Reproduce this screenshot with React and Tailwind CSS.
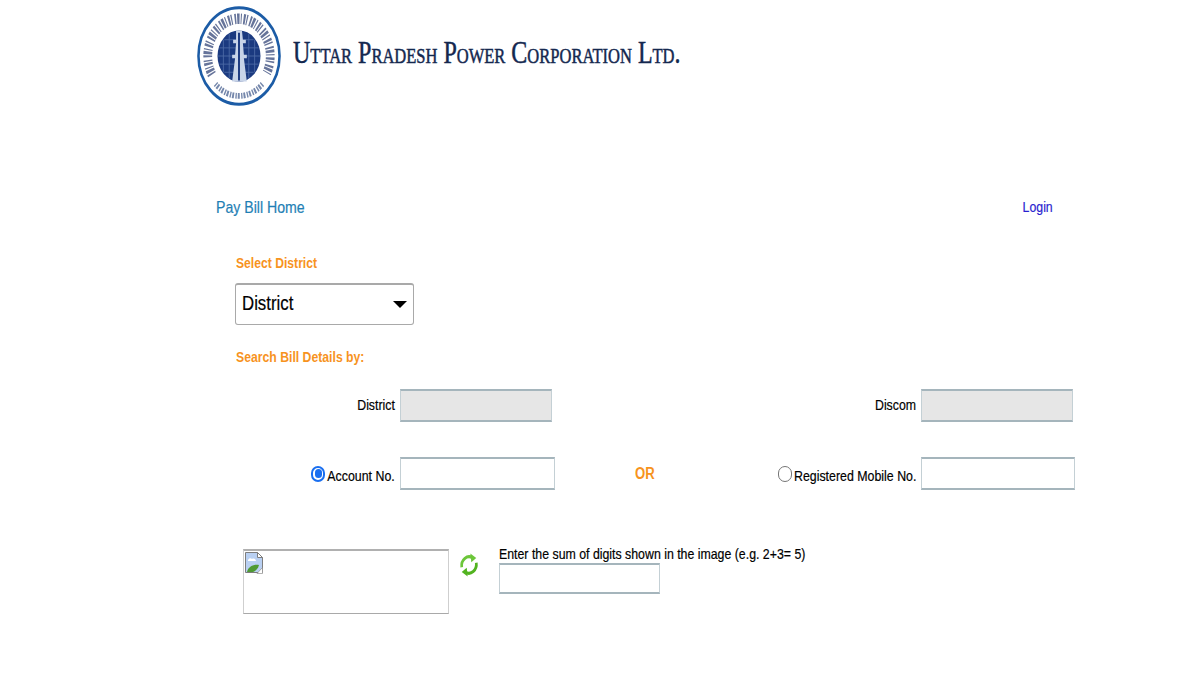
const labelFont = { fontFamily: '"Liberation Sans", Arial, sans-serif' };

function Logo() {
  return (
    <svg width="84" height="100" viewBox="0 0 86 86" preserveAspectRatio="none" className="shrink-0">
      <circle cx="43" cy="43" r="41.5" fill="#fff" stroke="#1c5ca6" strokeWidth="2.6" />
      <path d="M15.3 59A32 32 0 1 1 70.7 59" fill="none" stroke="#2b3f73" strokeWidth="9" strokeDasharray="1.6 1 2.4 1.2 1 1.8 2 1 1.2 2.4" opacity="0.72" />
      <path d="M19 67A33 33 0 0 0 67 67" fill="none" stroke="#3a5488" strokeWidth="5" strokeDasharray="1.4 1 2 1.4" opacity="0.7" />
      <circle cx="43" cy="43" r="22" fill="#1b3a80" />
      <g stroke="#6f8cc0" strokeWidth="0.8" opacity="0.6" fill="none">
        <path d="M23 36h40M21.500 43h43M23 50h40M28 29h30M28 57h30" />
        <path d="M33 24v38M53 24v38M27 29v28M59 29v28" />
      </g>
      <path d="M40 21h6l1 8h3v3h-3l1 10h3v3h-3l3 20H36l3-20h-3v-3h3l1-10h-3v-3h3z" fill="#c8d4e8" />
      <path d="M42 23h2v41h-2z" fill="#1b3a80" />
    </svg>
  );
}

function BrokenImage() {
  return (
    <svg width="18" height="22" viewBox="0 0 18 22" className="shrink-0">
      <path d="M.5.5h12l5 5v15H.5z" fill="#b9d0f2" stroke="#7d7d7d" />
      <path d="M12.500.5v5h5z" fill="#fff" stroke="#7d7d7d" />
      <path d="M3 8c1-2 3-2 4-1 2-1 4 0 4 2H3z" fill="#fff" />
      <path d="M2 20c1-5 6-8 12-7-1 4-4 7-7 7z" fill="#4f9a33" />
      <path d="M12 21.500l5.500-6v6z" fill="#fff" stroke="#7d7d7d" strokeWidth="0.6" />
    </svg>
  );
}

function RefreshIcon() {
  return (
    <svg width="20" height="24" viewBox="0 0 22 22" preserveAspectRatio="none" className="shrink-0">
      <path d="M3 13A8.200 8.200 0 0 1 15 4.500" fill="none" stroke="#6cc63a" strokeWidth="3" />
      <path d="M12.500 0.500l6.500 4-5.500 4z" fill="#6cc63a" />
      <path d="M19 9A8.200 8.200 0 0 1 7 17.500" fill="none" stroke="#52b320" strokeWidth="3" />
      <path d="M9.500 21.500l-6.500-4 5.500-4z" fill="#52b320" />
    </svg>
  );
}

function Field({ className }) {
  return <div className={`h-[33px] border-y-2 border-x border-y-[#a5b5bc] border-x-[#c4d0d5] bg-white ${className}`} />;
}

export default function App() {
  return (
    <div className="w-[1200px] h-[675px] bg-white overflow-hidden text-black [-webkit-text-stroke:0.2px]" style={labelFont}>
      <header className="flex items-start pl-[197px] pt-[6px] h-[111px]">
        <Logo />
        <h1
          className="ml-[12px] mt-[30px] text-[#14284f] text-[32px] leading-none whitespace-nowrap origin-left scale-x-[0.75] [-webkit-text-stroke:0.5px]"
          style={{ fontFamily: '"Liberation Serif", serif', fontVariant: 'small-caps' }}
        >
          Uttar Pradesh Power Corporation Ltd.
        </h1>
      </header>

      <nav className="flex justify-between items-center mt-[86px] pl-[216px] pr-[147px] h-[22px]">
        <a className="text-[#1f7fb5] text-[17px] origin-left scale-x-[0.83]">Pay Bill Home</a>
        <a className="text-[#2a1fd0] text-[15px] origin-right scale-x-[0.82] -mt-[2px]">Login</a>
      </nav>

      <main className="pl-[235px]">
        <label className="block mt-[34px] ml-[1px] text-[#f7931e] text-[15px] leading-[20px] font-bold whitespace-nowrap origin-left scale-x-[0.81] [-webkit-text-stroke:0px]">Select District</label>
        <div className="mt-[10px] w-[179px] h-[42px] rounded-[3px] border border-[#a9a9a9] border-t-2 flex items-center justify-between pl-[6px] pr-[6px]">
          <span className="text-[21px] origin-left scale-x-[0.8] -mt-[3px]">District</span>
          <span className="w-0 h-0 border-x-[7px] border-x-transparent border-t-[7px] border-t-black -mt-[1px]" />
        </div>
        <label className="block mt-[22px] ml-[1px] text-[#f7931e] text-[15px] leading-[20px] font-bold whitespace-nowrap origin-left scale-x-[0.815] [-webkit-text-stroke:0px]">Search Bill Details by:</label>

        <div className="mt-[22px] w-[840px] grid grid-cols-[320px_200px_320px] items-center text-[15px]">
          <div className="flex items-center justify-end gap-[5px] pr-[3px]">
            <span className="origin-right scale-x-[0.82] whitespace-nowrap">District</span>
            <Field className="w-[152px] !bg-[#e6e6e6]" />
          </div>
          <div />
          <div className="flex items-center justify-end gap-[5px] pr-[2px]">
            <span className="origin-right scale-x-[0.82] whitespace-nowrap">Discom</span>
            <Field className="w-[152px] !bg-[#e6e6e6]" />
          </div>
        </div>

        <div className="mt-[35px] w-[840px] grid grid-cols-[320px_200px_320px] items-center text-[15px]">
          <div className="flex items-center justify-end gap-[5px]">
            <span className="w-[14px] h-[16px] rounded-full border-2 border-[#1a6ff0] flex items-center justify-center -mr-[17px] shrink-0">
              <span className="w-[7px] h-[9px] rounded-full bg-[#1a6ff0]" />
            </span>
            <span className="mt-[5px] origin-right scale-x-[0.825] whitespace-nowrap">Account No.</span>
            <Field className="w-[155px]" />
          </div>
          <div className="pl-[80px]">
            <span className="block text-[#f7931e] text-[16px] font-bold origin-left scale-x-[0.82] [-webkit-text-stroke:0px]">OR</span>
          </div>
          <div className="flex items-center justify-end gap-[5px]">
            <span className="w-[14px] h-[16px] rounded-full border border-[#767676] -mr-[29px] shrink-0" />
            <span className="mt-[5px] origin-right scale-x-[0.825] whitespace-nowrap">Registered Mobile No.</span>
            <Field className="w-[154px]" />
          </div>
        </div>

        <div className="mt-[59px] ml-[8px] flex items-start">
          <div className="w-[206px] h-[65px] border border-x-[#cfcfcf] border-b-[#a9a9a9] border-t-2 border-t-[#b0b0b0] p-[1px]">
            <BrokenImage />
          </div>
          <div className="ml-[10px] mt-[4px]"><RefreshIcon /></div>
          <div className="ml-[20px] -mt-[5px]">
            <p className="text-[15px] leading-[19px] whitespace-nowrap origin-left scale-x-[0.822]">Enter the sum of digits shown in the image (e.g. 2+3= 5)</p>
            <Field className="w-[161px] !h-[31px]" />
          </div>
        </div>
      </main>
    </div>
  );
}
